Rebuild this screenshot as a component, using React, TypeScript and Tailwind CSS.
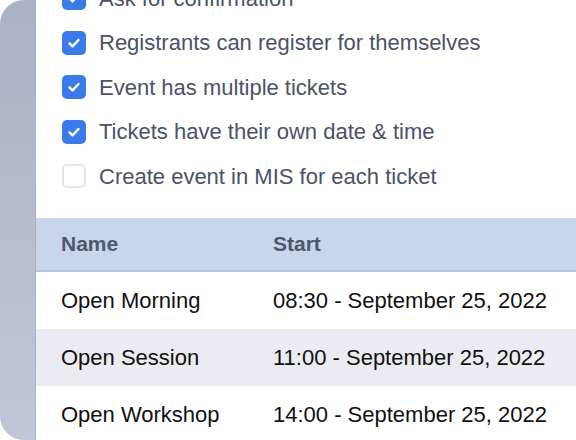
import React from 'react';

const options = [
  { label: 'Ask for confirmation', checked: true },
  { label: 'Registrants can register for themselves', checked: true },
  { label: 'Event has multiple tickets', checked: true },
  { label: 'Tickets have their own date & time', checked: true },
  { label: 'Create event in MIS for each ticket', checked: false },
];

const tickets = [
  { name: 'Open Morning', start: '08:30 - September 25, 2022' },
  { name: 'Open Session', start: '11:00 - September 25, 2022' },
  { name: 'Open Workshop', start: '14:00 - September 25, 2022' },
];

const Checkbox = ({ checked }: { checked: boolean }) =>
  checked ? (
    <div className="flex h-[24px] w-[24px] shrink-0 items-center justify-center rounded-[5px] bg-[#3a7be9]">
      <svg width="14" height="14" viewBox="0 0 14 14" fill="none">
        <path d="M2.5 7.3l3 3 6-6.3" stroke="white" strokeWidth="2.4" strokeLinecap="round" strokeLinejoin="round" />
      </svg>
    </div>
  ) : (
    <div className="h-[24px] w-[24px] shrink-0 rounded-[5px] border-2 border-[#e3e5ea] bg-white" />
  );

export default function App() {
  return (
    <div className="flex h-[440px] w-[576px] overflow-hidden bg-white" style={{ fontFamily: '"Liberation Sans", Arial, sans-serif' }}>
      <div className="h-[440px] w-[35px] shrink-0 rounded-l-[24px] bg-gradient-to-b from-[#aab2c3] to-[#c0c7d6]" />
      <div className="min-w-0 flex-1 border-l border-[#a9b1c1] bg-white">
        <div className="-mt-[24px] pb-[19.5px]">
          {options.map((o) => (
            <div key={o.label} className="flex h-[44.5px] items-center gap-[13px] pl-[26px]">
              <Checkbox checked={o.checked} />
              <span className="whitespace-nowrap text-[22px] text-[#4a5366]">{o.label}</span>
            </div>
          ))}
        </div>
        <div className="flex h-[54px] items-center border-b-2 border-[#b6c3dc] bg-[#c8d5ec] text-[21px] font-bold text-[#4d586e]">
          <div className="w-[237px] shrink-0 pl-[25px]">Name</div>
          <div>Start</div>
        </div>
        {tickets.map((t, i) => (
          <div key={t.name} className={`flex h-[57px] items-center whitespace-nowrap text-[22px] text-[#111] ${i % 2 === 1 ? 'bg-[#ebecf1]' : 'bg-white'}`}>
            <div className="w-[237px] shrink-0 pl-[25px]">{t.name}</div>
            <div>{t.start}</div>
          </div>
        ))}
      </div>
    </div>
  );
}
